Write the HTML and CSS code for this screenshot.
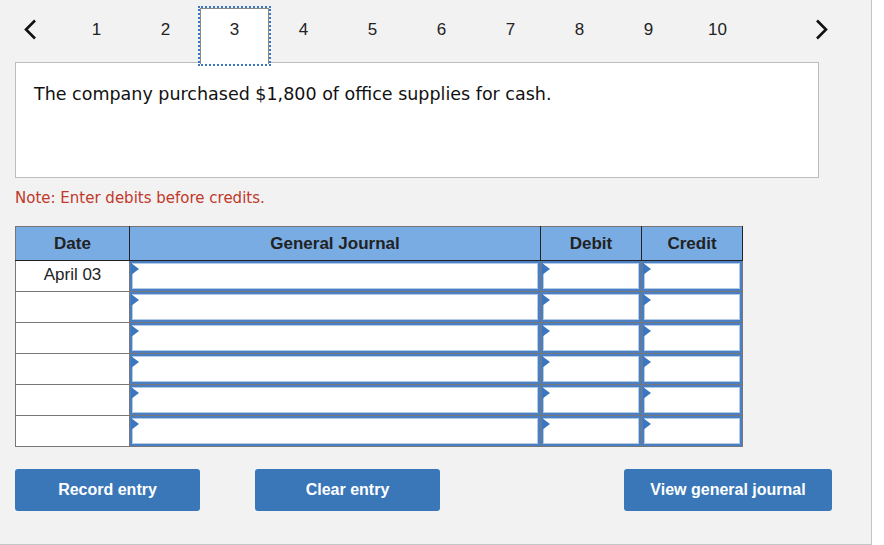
FILE: index.html
```html
<!DOCTYPE html>
<html lang="en">
  <head>
    <meta charset="UTF-8" />
    <title>Journal entry</title>
    <link rel="stylesheet" href="styles.css">
  </head>
  <body>
    <div class="page">
      <div class="nav">
        <button class="arrow arrow-prev" type="button" aria-label="Previous">
          <svg width="14" height="21" viewBox="0 0 14 21"><polyline points="12,1.5 3,10.5 12,19.5" fill="none" stroke="#111" stroke-width="2.6"/></svg>
        </button>
        <div class="tabs">
          <span class="tab">1</span>
          <span class="tab">2</span>
          <span class="tab active">3</span>
          <span class="tab">4</span>
          <span class="tab">5</span>
          <span class="tab">6</span>
          <span class="tab">7</span>
          <span class="tab">8</span>
          <span class="tab">9</span>
          <span class="tab">10</span>
        </div>
        <button class="arrow arrow-next" type="button" aria-label="Next">
          <svg width="14" height="21" viewBox="0 0 14 21"><polyline points="2,1.5 11,10.5 2,19.5" fill="none" stroke="#111" stroke-width="2.6"/></svg>
        </button>
      </div>

      <div class="question">The company purchased $1,800 of office supplies for cash.</div>

      <p class="note">Note: Enter debits before credits.</p>

      <table class="journal">
        <thead>
          <tr>
            <th class="col-date">Date</th>
            <th class="col-desc">General Journal</th>
            <th class="col-num">Debit</th>
            <th class="col-num">Credit</th>
          </tr>
        </thead>
        <tbody>
          <tr>
            <td class="date">April 03</td>
            <td class="cell"><input type="text" /></td>
            <td class="cell"><input type="text" /></td>
            <td class="cell"><input type="text" /></td>
          </tr>
          <tr>
            <td class="date"></td>
            <td class="cell"><input type="text" /></td>
            <td class="cell"><input type="text" /></td>
            <td class="cell"><input type="text" /></td>
          </tr>
          <tr>
            <td class="date"></td>
            <td class="cell"><input type="text" /></td>
            <td class="cell"><input type="text" /></td>
            <td class="cell"><input type="text" /></td>
          </tr>
          <tr>
            <td class="date"></td>
            <td class="cell"><input type="text" /></td>
            <td class="cell"><input type="text" /></td>
            <td class="cell"><input type="text" /></td>
          </tr>
          <tr>
            <td class="date"></td>
            <td class="cell"><input type="text" /></td>
            <td class="cell"><input type="text" /></td>
            <td class="cell"><input type="text" /></td>
          </tr>
          <tr>
            <td class="date"></td>
            <td class="cell"><input type="text" /></td>
            <td class="cell"><input type="text" /></td>
            <td class="cell"><input type="text" /></td>
          </tr>
        </tbody>
      </table>

      <div class="actions">
        <button class="btn" type="button">Record entry</button>
        <button class="btn" type="button">Clear entry</button>
        <button class="btn btn-wide" type="button">View general journal</button>
      </div>
    </div>
  </body>
</html>
```

FILE: styles.css
```css
* {
  box-sizing: border-box;
}

html,
body {
  margin: 0;
  padding: 0;
  background: #fff;
}

.page {
  width: 872px;
  height: 545px;
  background: #f2f2f2;
  border-right: 1px solid #c4c4c4;
  border-bottom: 1px solid #c4c4c4;
  padding: 0 0 0 15px;
}

/* question navigation */
.nav {
  display: flex;
  height: 62px;
}

.arrow {
  background: none;
  border: none;
  padding: 0;
  width: 30px;
  height: 58px;
  display: flex;
  align-items: center;
  justify-content: center;
  cursor: pointer;
}

.arrow-prev {
  margin-right: 17px;
}

.arrow-next {
  margin-left: 55px;
}

.tabs {
  display: flex;
}

.tab {
  width: 69px;
  height: 56px;
  margin-top: 8px;
  display: flex;
  justify-content: center;
  padding-top: 12px;
  font-family: "Liberation Sans", Arial, sans-serif;
  font-size: 17px;
  color: #222;
}

.tab.active {
  position: relative;
  z-index: 1;
  background: #fff;
  border: 1px solid #8a8a8a;
  border-bottom: none;
  outline: 2px dotted #3a77c0;
  padding-top: 11px;
}

.question {
  width: 804px;
  height: 116px;
  background: #fff;
  border: 1px solid #bdbdbd;
  padding: 21px 18px;
  font-family: "DejaVu Sans", Verdana, sans-serif;
  font-size: 17.5px;
  color: #111;
}

.note {
  margin: 11px 0 19px;
  font-family: "DejaVu Sans", Verdana, sans-serif;
  font-size: 15px;
  color: #c0392b;
}

/* journal grid */
.journal {
  border-collapse: collapse;
  width: 728px;
  font-family: "Liberation Sans", Arial, sans-serif;
  font-size: 17px;
  color: #222;
}

.journal th {
  background: #79ace3;
  height: 34px;
  font-weight: bold;
  border: 1px solid #222;
  border-top-color: #777;
}

.journal th:first-child {
  border-left-color: #777;
}

.col-date {
  width: 114px;
}

.col-desc {
  width: 411px;
}

.col-num {
  width: 101px;
}

.journal td {
  height: 31px;
  border: 1px solid #777;
  padding: 0;
  background: #fff;
}

.date {
  text-align: center;
  vertical-align: top;
  padding-top: 4px !important;
}

.cell {
  position: relative;
}

.cell::before {
  content: "";
  position: absolute;
  top: 2px;
  left: 1px;
  border-left: 8px solid #3a77c0;
  border-top: 6px solid transparent;
  border-bottom: 6px solid transparent;
}

.cell input {
  display: block;
  width: 100%;
  height: 30px;
  margin: 0;
  border: 2px solid #4a80c3;
  box-shadow: inset 0 0 0 1px #b3cbe9;
  background: #fff;
  outline: none;
}

.actions {
  display: flex;
  gap: 55px;
  margin-top: 22px;
  width: 817px;
}

.btn {
  width: 185px;
  height: 42px;
  background: #3a77b8;
  color: #fff;
  border: none;
  border-radius: 3px;
  font-family: "Liberation Sans", Arial, sans-serif;
  font-size: 16px;
  font-weight: bold;
  cursor: pointer;
}

.btn-wide {
  width: 208px;
  margin-left: auto;
}
```
